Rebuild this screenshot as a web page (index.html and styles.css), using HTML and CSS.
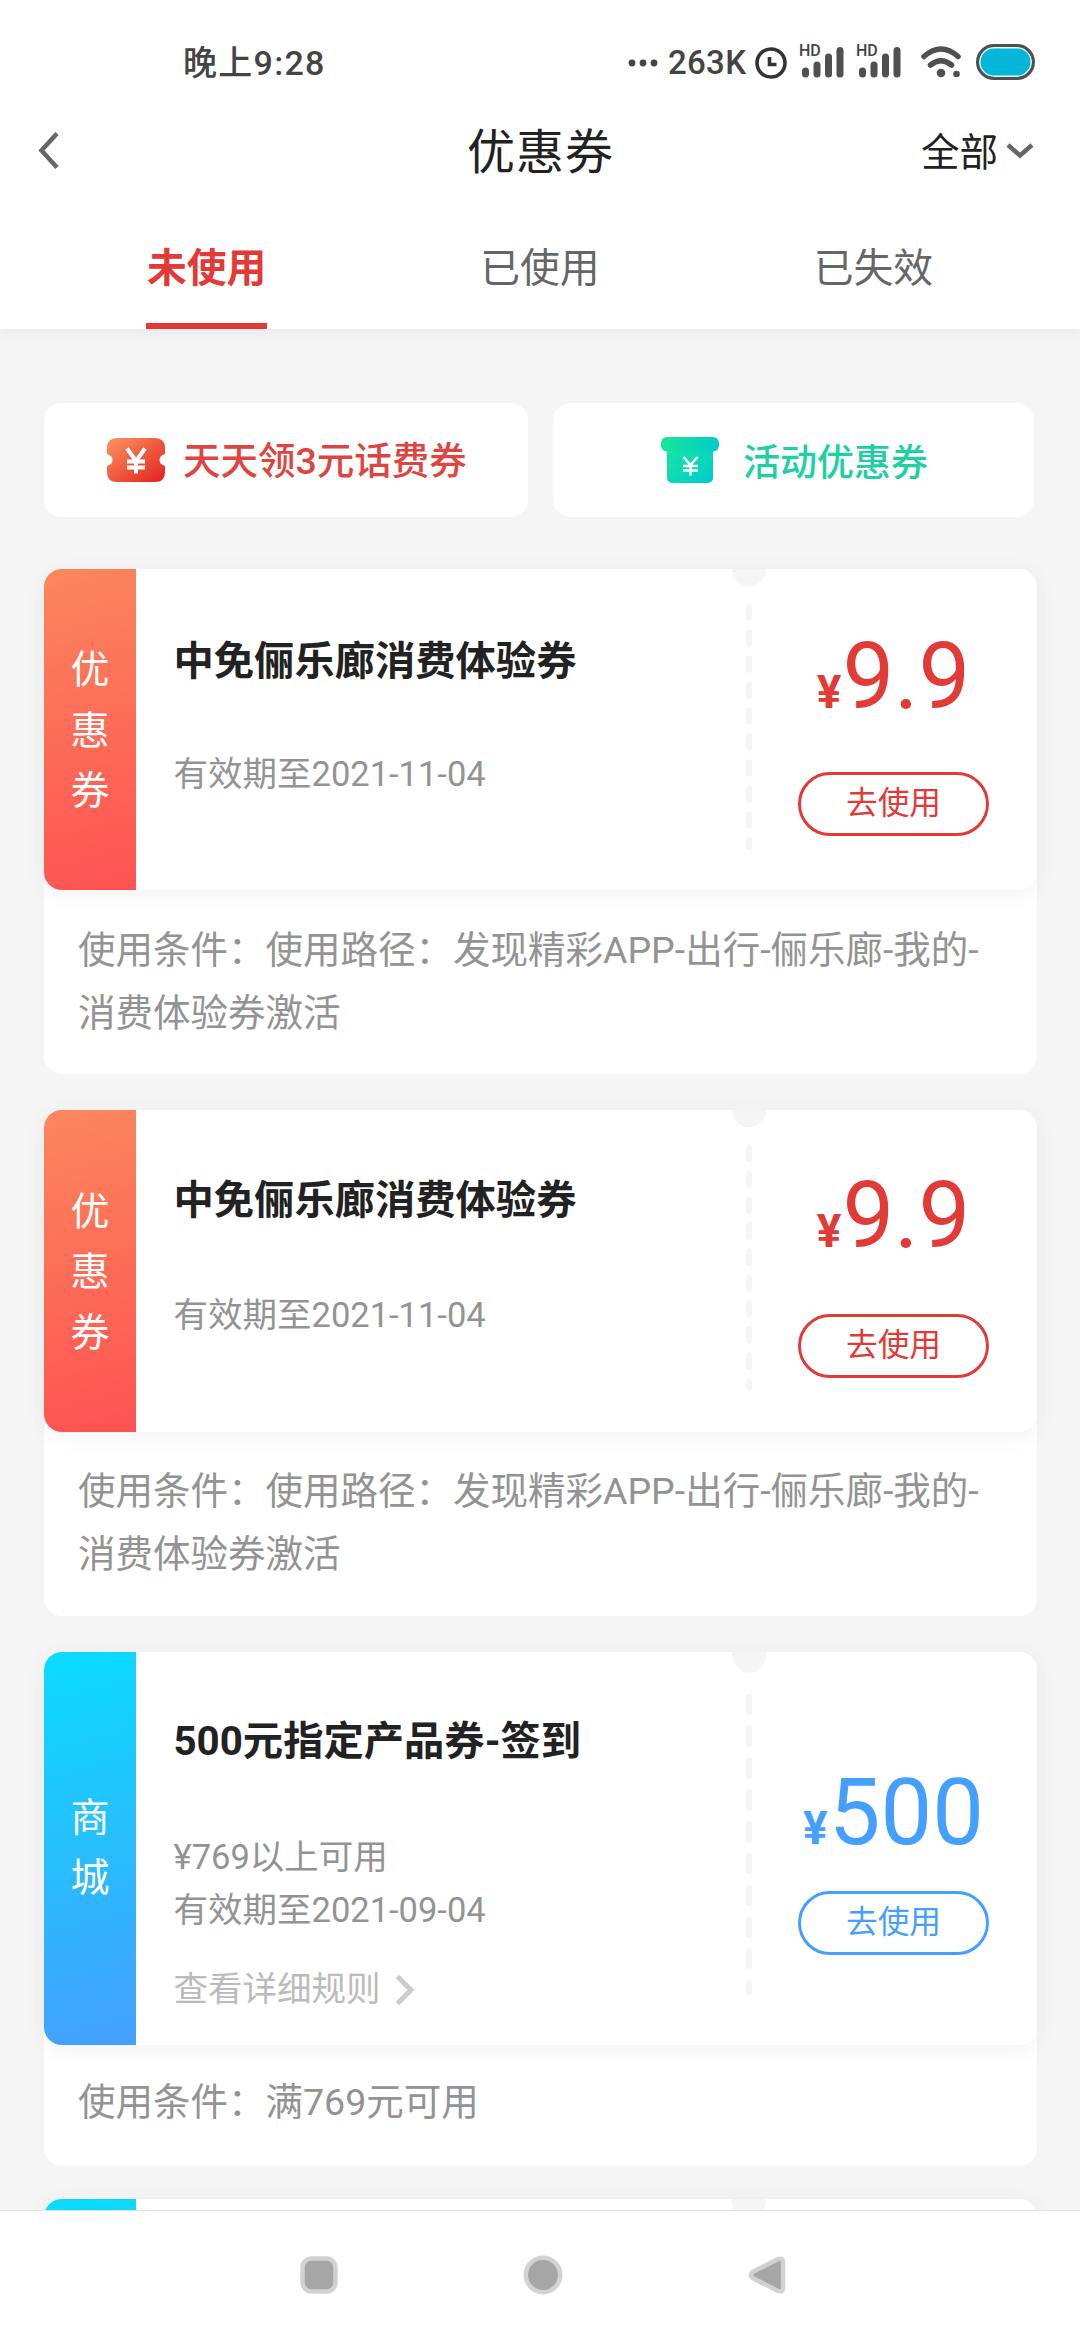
FILE: index.html
```html
<!DOCTYPE html>
<html lang="zh-CN">
<head>
<meta charset="utf-8">
<title>优惠券</title>
<link rel="stylesheet" href="styles.css">
</head>
<body>
<svg class="defs" width="0" height="0">
  <symbol id="tear" viewBox="0 0 36 322" preserveAspectRatio="none">
    <circle cx="18" cy="0" r="17.2"/>
    <path d="M18 37.5V278" />
  </symbol>
</svg>
<div class="screen">
  <header class="top">
    <div class="status">
      <span class="time">晚上9:28</span>
      <div class="status-icons">
        <svg class="dots" width="30" height="8" viewBox="0 0 30 8"><circle cx="4" cy="4" r="3.4"/><circle cx="15" cy="4" r="3.4"/><circle cx="26" cy="4" r="3.4"/></svg>
        <span class="speed">263K</span>
        <svg class="clock" width="32" height="32" viewBox="0 0 32 32"><circle cx="16" cy="16" r="14"/><path d="M14.500 10v7.500H21.500"/></svg>
        <div class="signal">
          <span>HD</span>
          <svg width="46" height="36" viewBox="0 0 46 36"><path d="M6.500 27v3M18 21v9M29.500 13v17M41 6.500v23.500"/></svg>
        </div>
        <div class="signal">
          <span>HD</span>
          <svg width="46" height="36" viewBox="0 0 46 36"><path d="M6.500 27v3M18 21v9M29.500 13v17M41 6.500v23.500"/></svg>
        </div>
        <svg class="wifi" width="40" height="34" viewBox="0 0 40 34"><path d="M3 11.500Q20-3.500 37 11.500M9.500 20Q20 11.500 30.500 20"/><circle cx="20" cy="28" r="4.300"/><circle cx="35.500" cy="29" r="3.300"/></svg>
        <span class="battery"></span>
      </div>
    </div>
    <div class="navbar">
      <svg class="back" width="24" height="42" viewBox="0 0 24 42"><path d="M21 3.500 5.500 20.500 21 37.500"/></svg>
      <h1>优惠券</h1>
      <div class="filter"><span>全部</span><svg width="28" height="18" viewBox="0 0 28 18"><path d="M2 3 14 13.500 26 3"/></svg></div>
    </div>
    <nav class="tabs">
      <div class="tab active"><span>未使用</span></div>
      <div class="tab"><span>已使用</span></div>
      <div class="tab"><span>已失效</span></div>
    </nav>
  </header>

  <main class="content">
    <section class="shortcuts">
      <div class="shortcut red">
        <svg width="58" height="46" viewBox="0 0 58 46">
          <defs><linearGradient id="gr" x1="0" y1="0" x2="1" y2="1"><stop offset="0" stop-color="#fd9560"/><stop offset="1" stop-color="#e3201f"/></linearGradient></defs>
          <path fill="url(#gr)" d="M10 1H48Q58 1 58 11V17Q52.500 18.500 52.500 23T58 29V35Q58 45 48 45H10Q0 45 0 35V29Q5.500 27.500 5.500 23T0 17V11Q0 1 10 1Z"/>
          <path class="yen" d="M20 11.500 29 24 38 11.500M29 23V36.500M20 24.500H38M20 30.500H38"/>
        </svg>
        <span>天天领3元话费券</span>
      </div>
      <div class="shortcut green">
        <svg width="58" height="48" viewBox="0 0 58 48">
          <defs><linearGradient id="gg" x1="0" y1="0" x2="1" y2="1"><stop offset="0" stop-color="#1ae898"/><stop offset="1" stop-color="#00cbd2"/></linearGradient>
          <linearGradient id="gt"><stop offset="0" stop-color="#18e797"/><stop offset="1" stop-color="#02cbca"/></linearGradient></defs>
          <rect x="6" y="4" width="46" height="43" rx="5" fill="url(#gg)"/>
          <rect x="0" y="1" width="58" height="14.500" rx="6" fill="url(#gt)"/>
          <path class="yen small" d="M22.500 21 29.500 29 36.500 21M29.500 28V39.500M22 30H37M22 34.500H37"/>
        </svg>
        <span>活动优惠券</span>
      </div>
    </section>

    <article class="coupon">
      <div class="ticket">
        <div class="kind"><span>优</span><span>惠</span><span>券</span></div>
        <div class="info"><h2>中免俪乐廊消费体验券</h2><p class="meta">有效期至2021-11-04</p></div>
        <svg class="tear"><use href="#tear" width="100%" height="100%"/></svg>
        <div class="value"><p class="price"><b>¥</b>9.9</p><span class="use">去使用</span></div>
      </div>
      <p class="terms">使用条件：使用路径：发现精彩APP-出行-俪乐廊-我的-消费体验券激活</p>
    </article>

    <article class="coupon snug">
      <div class="ticket">
        <div class="kind"><span>优</span><span>惠</span><span>券</span></div>
        <div class="info"><h2>中免俪乐廊消费体验券</h2><p class="meta">有效期至2021-11-04</p></div>
        <svg class="tear"><use href="#tear" width="100%" height="100%"/></svg>
        <div class="value"><p class="price"><b>¥</b>9.9</p><span class="use">去使用</span></div>
      </div>
      <p class="terms">使用条件：使用路径：发现精彩APP-出行-俪乐廊-我的-消费体验券激活</p>
    </article>

    <article class="coupon mall">
      <div class="ticket">
        <div class="kind"><span>商</span><span>城</span></div>
        <div class="info">
          <h2>500元指定产品券-签到</h2>
          <p class="meta">¥769以上可用<br>有效期至2021-09-04</p>
          <p class="rules">查看详细规则<svg width="20" height="32" viewBox="0 0 20 32"><path d="M2.500 2.500 16 16 2.500 29.500"/></svg></p>
        </div>
        <svg class="tear"><use href="#tear" width="100%" height="100%"/></svg>
        <div class="value"><p class="price"><b>¥</b>500</p><span class="use">去使用</span></div>
      </div>
      <p class="terms">使用条件：满769元可用</p>
    </article>

    <article class="coupon mall">
      <div class="ticket">
        <div class="kind"></div>
        <div class="info"></div>
        <svg class="tear"><use href="#tear" width="100%" height="100%"/></svg>
        <div class="value"></div>
      </div>
    </article>
  </main>

  <footer class="system-nav">
    <svg width="38" height="38" viewBox="0 0 38 38"><rect x="2.500" y="2.500" width="33" height="33" rx="9"/></svg>
    <svg width="40" height="40" viewBox="0 0 40 40"><circle cx="20" cy="20" r="17.200"/></svg>
    <svg width="38" height="38" viewBox="0 0 38 38"><path d="M29 3.500 4.500 16Q1.500 19 4.500 22L29 34.500Q35 37 35 32V6Q35 1 29 3.500Z"/></svg>
  </footer>
</div>
</body>
</html>
```
FILE: styles.css
```css
* { box-sizing: border-box; margin: 0; padding: 0; }
body { background: #f5f5f5; font-family: Roboto, "Noto Sans CJK SC", sans-serif; color: #222; }
svg { display: block; flex: none; }
h1, h2 { font-weight: 400; }
.defs { position: absolute; }
.screen { width: 1080px; height: 2340px; display: flex; flex-direction: column; overflow: hidden; }

.top { height: 329px; flex: none; background: #fff; box-shadow: 0 2px 14px rgba(0,0,0,.07); }
.status { height: 96px; padding: 28px 45px 0 183px; display: flex; justify-content: space-between; align-items: flex-start; color: #444; }
.time { font-size: 34px; line-height: 70px; height: 70px; font-weight: 500; letter-spacing: 1.300px; }
.status-icons { height: 69px; display: flex; align-items: center; }
.dots { fill: #444; }
.speed { font-size: 33px; font-weight: 500; margin-left: 10px; width: 80px; letter-spacing: .3px; }
.clock { margin-left: 7px; fill: none; stroke: #333; stroke-width: 3.600; }
.signal { width: 46px; height: 36px; margin: -1px 0 0 12px; display: grid; }
.signal > * { grid-area: 1 / 1; }
.signal + .signal { margin-left: 11px; }
.signal span { font-size: 16px; line-height: 14px; font-weight: 500; color: #444; }
.signal svg { fill: none; stroke: #505050; stroke-width: 7; stroke-linecap: round; }
.wifi { margin: -2px 0 0 19px; fill: #505050; }
.wifi path { fill: none; stroke: #505050; stroke-width: 5.500; stroke-linecap: round; }
.battery { width: 59px; height: 36px; margin: -2px 0 0 15px; border: 3px solid #505050; border-radius: 18px; background: #04b6d8; box-shadow: inset 0 0 0 1.500px #e4f8fc; }

.navbar { height: 117px; padding: 0 46px 8px 36px; display: grid; grid-template-columns: 1fr auto 1fr; align-items: center; }
.navbar path { fill: none; stroke: #666; stroke-width: 4.500; }
.navbar h1 { font-size: 48px; letter-spacing: 1px; margin: 0 0 5px 11px; }
.filter { justify-self: end; display: flex; align-items: center; gap: 8px; font-size: 38.500px; }
.filter span { margin-bottom: 3px; }
.tabs { height: 116px; padding: 0 40px; display: grid; grid-template-columns: repeat(3, 1fr); justify-items: center; }
.tab { height: 116px; width: 121px; text-align: center; font-size: 39.800px; line-height: 112px; color: #666; white-space: nowrap; }
.tab.active { color: #e23a36; font-weight: 700; border-bottom: 6px solid #e23a36; }

.content { flex: 1; min-height: 0; overflow: hidden; padding: 74px 43px 0 44px; }
.shortcuts { display: flex; gap: 25px; margin: 0 3px 51.500px 0; }
.shortcut { height: 114px; display: flex; align-items: center; background: #fff; border-radius: 18px; font-size: 37.500px; font-weight: 500; white-space: nowrap; }
.shortcut.red { width: 484px; padding-left: 63px; gap: 18px; color: #de4440; }
.shortcut.red span { margin-bottom: 6px; }
.shortcut.green { width: 481px; padding-left: 108px; gap: 24px; font-size: 37px; color: #20cfa4; }
.shortcut.green span { margin-bottom: 1px; }
.yen { fill: none; stroke: #fff; stroke-width: 4; }
.yen.small { stroke-width: 2.600; }

.coupon { margin-bottom: 36px; background: #fff; border-radius: 18px; color: #e23a36; }
.ticket { height: 321.700px; display: flex; background: #fff; border-radius: 18px; box-shadow: 0 4px 22px rgba(0,0,0,.055); }
.kind { width: 92px; padding-top: 3px; border-radius: 18px 0 0 18px; background: linear-gradient(165deg, #fb875d, #fe5253); color: #fff; display: flex; flex-direction: column; align-items: center; justify-content: center; font-size: 39px; line-height: 60.300px; }
.info { width: 595px; padding: 63px 0 0 37.500px; }
.info h2 { font-size: 40.300px; line-height: 60px; font-weight: 700; color: #222; white-space: nowrap; }
.meta { margin-top: 56px; font-size: 34.500px; line-height: 52.700px; color: #939393; }
.tear { width: 36px; height: 100%; fill: #f5f5f5; stroke: #f5f5f5; stroke-width: 0; }
#tear path { stroke-width: 6; stroke-linecap: round; stroke-dasharray: 11.500 14.500; }
.value { width: 270px; padding: 54.500px 17px 0 0; display: flex; flex-direction: column; align-items: center; }
.price { font-size: 92px; line-height: 108px; white-space: nowrap; }
.price b { font-size: 46px; line-height: 0; margin-right: 1px; }
.use { width: 191px; height: 64px; margin-top: 41px; border: 3px solid; border-radius: 32px; text-align: center; font-size: 31.700px; line-height: 57px; }
.terms { padding: 29px 34px; font-size: 37.500px; line-height: 63px; color: #939393; }

.snug .info { padding-top: 61px; }
.snug .meta { margin-top: 58px; }
.snug .value { padding-top: 52px; }
.snug .use { margin-top: 44px; }
.snug .terms { padding: 28px 34px 30px; }

.mall { margin-bottom: 33px; color: #459ffd; }
.mall .ticket { height: 393px; }
.mall .kind { padding-top: 0; background: linear-gradient(165deg, #0adcff, #459ffd); }
.mall .info { padding-top: 60px; }
.mall .meta { margin-top: 59px; }
.mall .value { padding-top: 107px; }
.mall .use { margin-top: 24px; }
.mall .terms { padding: 26px 34px 32px; }
.rules { margin-top: 27px; display: flex; align-items: center; gap: 14px; font-size: 34.500px; line-height: 52px; color: #bbb; }
.rules path { fill: none; stroke: #ccc; stroke-width: 5; }
.rules svg { margin-top: 2px; }

.system-nav { height: 130px; flex: none; border-top: 1px solid #e0e0e0; background: #fff; display: flex; align-items: center; justify-content: space-between; padding: 0 294px 2px 300px; fill: #a6a6a6; stroke: #d2d2d2; stroke-width: 4.500; position: relative; }
```
